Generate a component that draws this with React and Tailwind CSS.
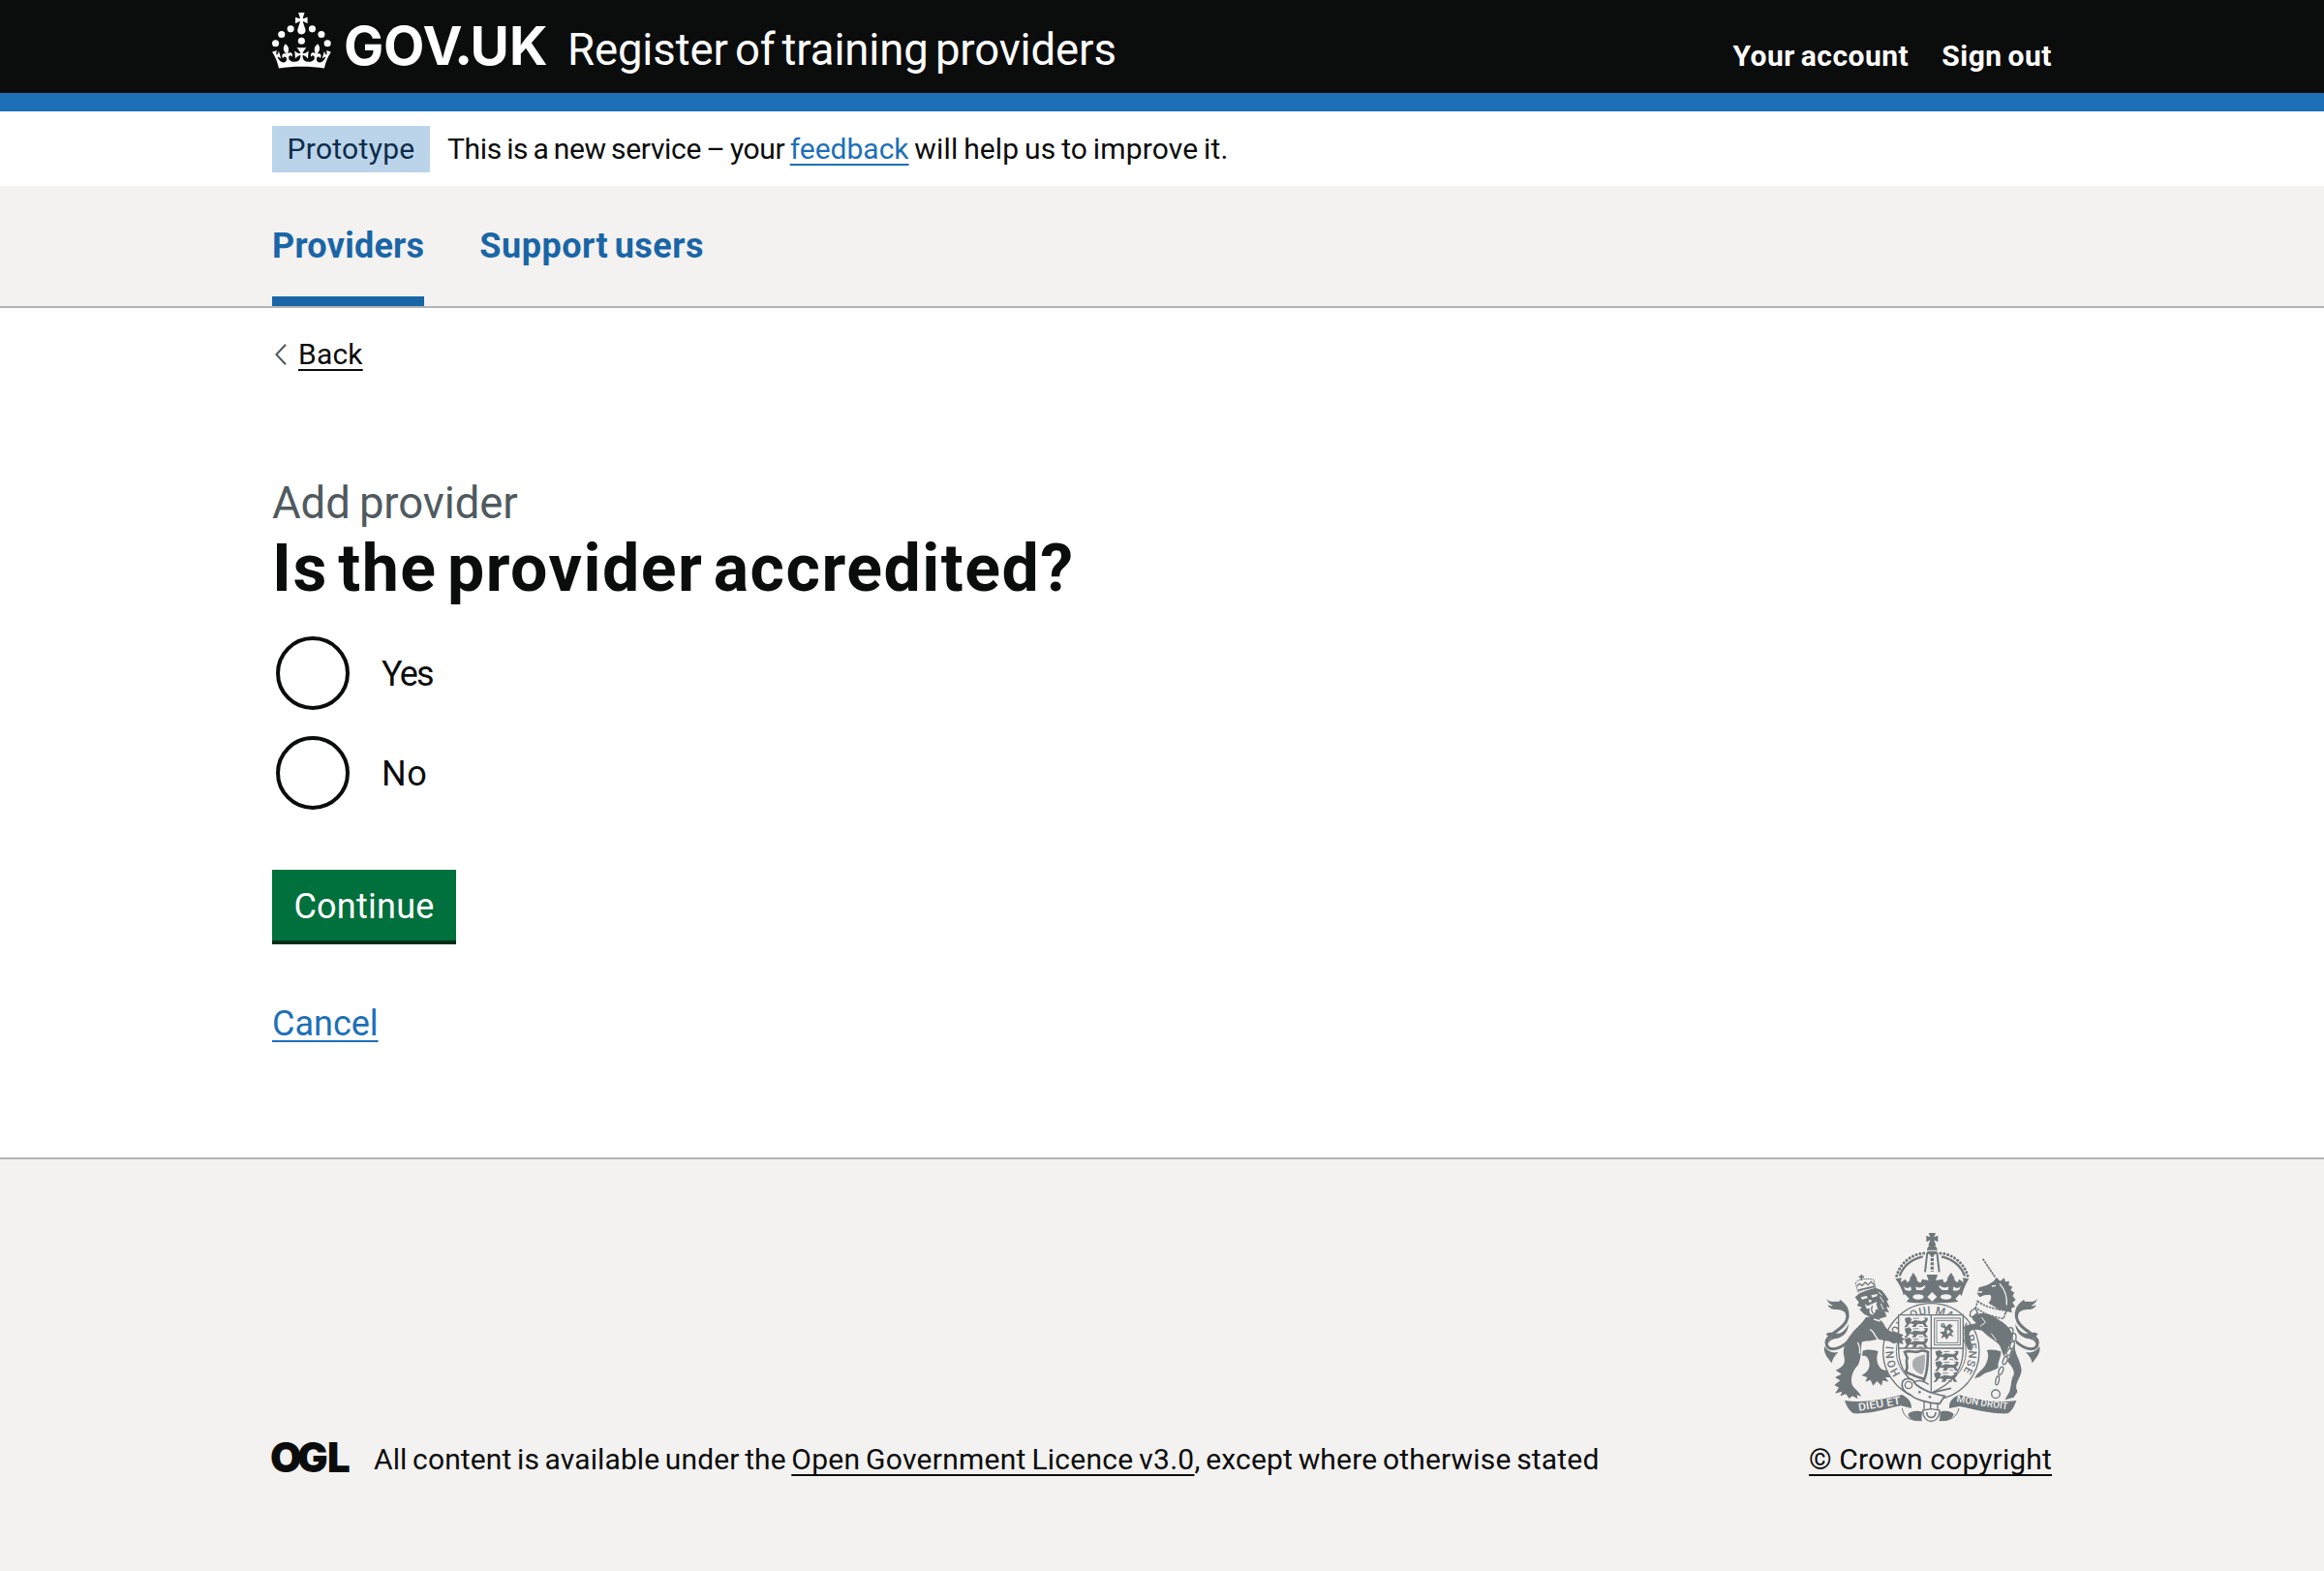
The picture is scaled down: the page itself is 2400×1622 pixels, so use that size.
import React from "react";

const underline =
  "underline decoration-2 underline-offset-[5px] [text-decoration-skip-ink:none]";

function GovUkLogo() {
  return (
    <svg width="284" height="90" viewBox="0 -13 284 90" fill="currentColor" role="img" aria-label="GOV.UK">
      <g transform="scale(0.9575)">
        <circle cx="20" cy="17.6" r="3.7" />
        <circle cx="10.2" cy="23.5" r="3.7" />
        <circle cx="3.7" cy="33.2" r="3.7" />
        <circle cx="31.7" cy="30.6" r="3.7" />
        <circle cx="43.3" cy="17.6" r="3.7" />
        <circle cx="53.2" cy="23.5" r="3.7" />
        <circle cx="59.7" cy="33.2" r="3.7" />
        <path d="M33.1,9.8c.2-.1.3-.3.5-.5l4.6,2.4v-6.8l-4.6,1.5c-.1-.2-.3-.3-.5-.5l1.9-5.9h-6.7l1.9,5.9c-.2.1-.3.3-.5.5l-4.6-1.5v6.8l4.6-2.4c.1.2.3.3.5.5l-2.6,8c-.9,2.8,1.2,5.7,4.1,5.7h0c3,0,5.1-2.9,4.1-5.7l-2.6-8ZM37,37.9s-3.4,3.8-4.1,6.1c2.2,0,4.2-.5,6.4-2.8l-.7,8.5c-2-2.8-4.4-4.1-5.7-3.8.1,3.1.5,6.7,5.8,7.2,3.7.3,6.7-1.5,7-3.8.4-2.6-2-4.3-3.7-1.6-1.4-4.5,2.4-6.1,4.9-3.2-1.9-4.5-1.8-7.7,2.4-10.9,3,4,2.6,7.3-1.2,11.1,2.4-1.3,6.2,0,4,4.6-1.2-2.8-3.7-2.2-4.2.2-.3,1.7.7,3.7,3,4.2,1.9.3,4.7-.9,7-5.9-1.3,0-2.4.7-3.9,1.7l2.4-8c.6,2.3,1.4,3.7,2.2,4.5.6-1.6.5-2.8,0-5.3l5,1.8c-2.6,3.6-5.2,8.7-7.3,17.5-7.4-1.1-15.7-1.7-24.5-1.7h0c-8.8,0-17.1.6-24.5,1.7-2.1-8.9-4.7-13.9-7.3-17.5l5-1.8c-.5,2.5-.6,3.7,0,5.3.8-.8,1.6-2.3,2.2-4.5l2.4,8c-1.5-1-2.6-1.7-3.9-1.7,2.3,5,5.2,6.2,7,5.9,2.3-.4,3.3-2.4,3-4.2-.5-2.4-3-3.1-4.2-.2-2.2-4.6,1.6-6,4-4.6-3.7-3.7-4.2-7.1-1.2-11.1,4.2,3.2,4.3,6.4,2.4,10.9,2.5-2.8,6.3-1.3,4.9,3.2-1.8-2.7-4.1-1-3.7,1.6.3,2.3,3.3,4.1,7,3.8,5.4-.5,5.7-4.2,5.8-7.2-1.3-.2-3.7,1-5.7,3.8l-.7-8.5c2.2,2.3,4.2,2.7,6.4,2.8-.7-2.3-4.1-6.1-4.1-6.1h10.6,0Z" />
      </g>
      <text y="54" className="font-[Inter,sans-serif] text-[55px] font-bold">
        <tspan x="74 115 155.5">GOV</tspan>
        <tspan x="190.5" className="font-[Lato,sans-serif] text-[60px] font-black">.</tspan>
        <tspan x="204.5 245">UK</tspan>
      </text>
    </svg>
  );
}

function OglLogo() {
  return (
    <svg width="84" height="60" viewBox="-3 -12 84 60" fill="currentColor" role="img" aria-label="OGL" className="-mb-[14px] -ml-[3px]">
      <text y="32" x="-2 26 57" className="font-[Inter,sans-serif] text-[42px] font-black">OGL</text>
    </svg>
  );
}

function Tail() {
  return (
    <g>
      <path d="M150 372C112 408 80 404 79 378C79 352 138 338 144 303C147 283 134 270 112 268" fill="none" stroke="currentColor" strokeWidth="9" />
      <path d="M80 242C90 256 104 250 118 252L122 246C146 262 152 280 149 302C143 284 126 276 112 276C96 278 86 270 84 262C92 266 96 266 99 264C88 258 82 250 80 242Z" />
      <path d="M78 352C92 342 106 352 118 350C132 346 140 336 148 320C148 346 130 362 110 366C96 368 88 372 84 384C78 376 88 366 96 362C88 362 82 358 78 352Z" />
      <path d="M73 390C70 412 82 424 96 442C98 430 104 420 116 408C98 412 84 406 73 390Z" />
    </g>
  );
}

function LionPassant({ x, y }) {
  return (
    <g transform={`translate(${x} ${y})`}>
      <path d="M2 4L16 0L24 7L20 16L34 10L56 13L66 8L60 2L74 3L72 13L66 20L74 31H64L58 22L42 22L36 31H24L30 23L18 20L8 32H0L8 22L4 14Z" />
      <path d="M28 5L46 4M46 28L58 30" stroke="currentColor" strokeWidth="2.5" />
    </g>
  );
}

function RoyalArms() {
  return (
    <svg width="224" height="198" viewBox="70 36 672 594" fill="currentColor" aria-hidden="true">
      {/* crown */}
      <path d="M396 39H418L413 52L425 47V67L413 61L419 78H395L401 61L389 67V47L401 52Z" />
      <circle cx="407" cy="92" r="16" />
      <path d="M391 94H423" stroke="#f3f2f1" strokeWidth="3" />
      <path d="M392 99L385 160M422 99L429 160" stroke="currentColor" strokeWidth="6" fill="none" />
      <path d="M407 104V158" stroke="currentColor" strokeWidth="10" strokeDasharray="9 4" />
      <path d="M378 112C344 120 318 140 306 172M436 112C470 120 496 140 508 172" stroke="currentColor" strokeWidth="7" fill="none" />
      <path d="M381 102C340 104 304 138 296 176M433 102C474 104 510 138 518 176" stroke="currentColor" strokeWidth="9" strokeLinecap="round" strokeDasharray="0.1 11.5" fill="none" />
      <path d="M293 181L312 178L310 192L324 182L330 192C336 190 340 184 338 178C344 172 344 168 348 162C354 168 356 174 360 180C358 186 364 192 372 192L376 182L396 186L390 168H424L418 186L440 182L443 192C450 192 456 186 454 180C458 174 460 168 466 162C470 168 472 172 476 178C474 184 480 190 486 192L490 182L504 192L502 178L521 181C508 200 500 222 496 250C470 258 440 254 407 254C374 254 344 260 322 250C318 222 308 200 293 181Z" />
      <path d="M318 200C322 212 334 212 340 204L343 216C336 220 326 218 322 214ZM356 204C364 212 378 208 384 200L386 206L376 216H358ZM458 204C450 212 436 208 430 200L428 206L438 216H456ZM496 200C492 212 480 212 474 204L471 216C478 220 488 218 492 214Z" fill="#f3f2f1" />
      <path d="M322 228L336 242L322 258L308 244ZM407 222L422 237L407 251L392 237ZM493 228L507 244L493 258L479 242Z" fill="#f3f2f1" />
      <ellipse cx="364" cy="237" rx="17" ry="8" fill="#f3f2f1" />
      <ellipse cx="450" cy="237" rx="17" ry="8" fill="#f3f2f1" />

      {/* garter */}
      <circle cx="404" cy="406" r="149" fill="#f3f2f1" stroke="currentColor" strokeWidth="4" />
      <circle cx="404" cy="406" r="108" fill="none" stroke="currentColor" strokeWidth="3" />
      <defs>
        <path id="garter" d="M309 475A117 117 0 1 1 499 475" />
        <path id="motto-left" d="M180 590L316 568" />
        <path id="motto-right" d="M482 562L644 587" />
      </defs>
      <text className="font-[Roboto,sans-serif] text-[34px] font-medium">
        <textPath href="#garter" startOffset="0" textLength="505">HONI SOIT QUI MAL Y PENSE</textPath>
      </text>

      {/* shield */}
      <path d="M303 293H503V400C503 466 468 508 404 534C340 508 303 466 303 400Z" fill="#f3f2f1" stroke="currentColor" strokeWidth="4" />
      <path d="M404 293V530M303 396H503" stroke="currentColor" strokeWidth="4" />
      <LionPassant x={320} y={299} />
      <LionPassant x={320} y={331} />
      <LionPassant x={320} y={363} />
      <LionPassant x={415} y={402} />
      <LionPassant x={415} y={435} />
      <LionPassant x={411} y={469} />
      <rect x="414" y="303" width="80" height="83" fill="none" stroke="currentColor" strokeWidth="3" />
      <rect x="421" y="310" width="66" height="69" fill="none" stroke="currentColor" strokeWidth="2.5" />
      <path d="M434 320L444 318L450 330L460 320L472 326L464 334L474 344L466 350L474 360L460 356L452 370L446 360L434 366L440 354L430 346L444 344L446 334L434 330Z" />
      <path d="M454 340L462 344L455 352ZM438 324L444 324" fill="#f3f2f1" stroke="#f3f2f1" strokeWidth="3" />
      <path d="M322 408C340 400 352 412 366 406C378 400 384 404 394 408C392 430 396 462 382 494C374 484 362 488 350 480C340 474 330 478 326 466C336 452 322 438 330 426Z" fill="none" stroke="currentColor" strokeWidth="8" />
      <path d="M346 440C348 424 366 422 384 414C386 440 384 462 376 478C358 470 344 462 346 440Z" opacity="0.55" />

      {/* lion */}
      <Tail />
      <path d="M188 168V186M180 175H196" stroke="currentColor" strokeWidth="5" />
      <path d="M170 194C176 182 202 178 226 184L232 210C216 208 196 212 177 222Z" fill="none" stroke="currentColor" strokeWidth="3" strokeDasharray="5 2" />
      <path d="M174 204L182 196L190 202L200 192L208 200L218 190L228 200M178 216L230 204" fill="none" stroke="currentColor" strokeWidth="4" />
      <path d="M168 238L182 226L204 217L232 209L250 216L262 230L272 246L266 250L276 270L265 268L274 286L260 282L266 298L240 306L216 300L196 290L182 276L190 270L174 264L180 254Z" />
      <path d="M186 238L204 234L208 240L190 245ZM218 232L238 228L236 235L222 239ZM210 246L218 246L219 253L212 254ZM198 258L206 265L222 258L236 252L234 260L240 278L234 274L228 290C216 296 210 286 214 272L204 274Z" fill="#f3f2f1" />
      <path d="M246 236L256 254M248 258L256 276M240 222L252 232" stroke="#f3f2f1" strokeWidth="3" />
      <path d="M222 264C216 276 220 288 230 290" fill="none" stroke="currentColor" strokeWidth="4" />
      <path d="M202 300C226 296 252 302 262 330C276 350 296 346 318 354L312 362L324 368L314 372L318 384L300 378L288 382L274 374C258 372 244 370 238 366C230 374 206 372 190 376C184 396 190 420 178 448C164 462 154 482 158 506C162 520 182 528 187 546L174 540L176 553L160 544L150 552L140 538L122 544L128 530L106 536L118 518L104 510L122 496L106 486L126 476L108 464C136 452 138 440 134 420C128 396 140 372 158 350C174 330 188 322 202 300Z" />
      <path d="M192 404C206 398 226 400 240 406C234 422 234 440 244 454C254 470 278 460 270 476L278 486L262 486L272 500L254 496L250 512L236 498L224 512L216 494L200 500L206 486L188 480C204 472 216 458 212 440C210 424 200 416 190 420Z" />
      <path d="M214 338C228 342 228 360 238 366M176 378C184 392 184 400 182 412M226 306L246 312" fill="none" stroke="#f3f2f1" strokeWidth="4" />

      {/* unicorn */}
      <g transform="matrix(-1 0 0 1 813 0)">
        <Tail />
      </g>
      <path d="M564 119L602 176" stroke="currentColor" strokeWidth="5" strokeDasharray="8 2" />
      <path d="M546 226L552 208L578 200L598 188L606 176L618 188L630 178L634 190L646 188L644 200L656 206L650 216L662 224L656 234L666 246L656 254L664 268L652 272L654 286L640 282L630 296C622 276 600 270 582 256C588 246 594 238 586 230L568 232L554 238Z" />
      <path d="M592 204L604 202M546 222L562 222M616 196C632 214 640 236 638 262" fill="none" stroke="#f3f2f1" strokeWidth="4" />
      <path d="M548 250C570 268 600 274 636 280L628 304C598 300 566 290 542 270Z" fill="#f3f2f1" stroke="currentColor" strokeWidth="5" strokeDasharray="7 3" />
      <path d="M526 282L540 272L548 286L532 300L524 296Z" fill="#f3f2f1" stroke="currentColor" strokeWidth="4" />
      <path d="M544 290C566 284 596 292 616 310C640 322 664 352 664 388C660 412 682 432 684 466C680 490 664 504 668 522C676 532 664 540 660 548L632 556L646 532C654 508 650 494 660 478C664 460 644 442 634 428C620 410 624 388 604 376C590 366 572 352 562 342C544 336 524 336 522 352C522 366 534 388 530 404L518 400C508 382 504 356 508 330C516 320 530 324 544 318C534 310 528 304 532 296Z" />
      <path d="M576 402C592 398 608 402 620 406C622 424 608 440 612 456C594 470 574 466 556 484L538 490L546 476C560 464 570 454 574 444C580 430 584 416 576 402Z" />
      <path d="M560 300L572 316L556 328M590 350L606 372" fill="none" stroke="#f3f2f1" strokeWidth="3" />
      <path d="M656 340C668 350 664 366 656 384C644 410 632 432 620 468L604 524" fill="none" stroke="#f3f2f1" strokeWidth="15" />
      <g fill="none" stroke="currentColor" strokeWidth="4">
        <ellipse cx="650" cy="342" rx="8" ry="10" />
        <ellipse cx="661" cy="362" rx="6" ry="12" />
        <ellipse cx="655" cy="386" rx="6" ry="12" transform="rotate(18 655 386)" />
        <ellipse cx="645" cy="408" rx="6" ry="12" transform="rotate(28 645 408)" />
        <ellipse cx="633" cy="434" rx="6" ry="13" transform="rotate(20 633 434)" />
        <ellipse cx="620" cy="466" rx="6" ry="13" transform="rotate(22 620 466)" />
        <ellipse cx="609" cy="496" rx="5" ry="14" transform="rotate(12 609 496)" />
        <circle cx="604" cy="538" r="13" />
      </g>

      {/* buckle */}
      <path d="M316 498C328 484 350 490 356 508C380 528 404 536 446 544L430 568C396 566 356 556 340 540C322 534 308 518 316 498Z" fill="#f3f2f1" stroke="currentColor" strokeWidth="5" />
      <circle cx="334" cy="510" r="11" fill="none" stroke="currentColor" strokeWidth="4" />
      <path d="M348 504C364 488 384 500 396 508M466 520L412 532" fill="none" stroke="currentColor" strokeWidth="5" />
      <circle cx="368" cy="532" r="4" />
      <circle cx="400" cy="547" r="4" />

      {/* scroll */}
      <path d="M136 558C190 566 250 556 314 540C328 548 344 558 343 582L310 574C268 582 222 600 164 598C150 590 142 576 136 558Z" />
      <path d="M668 558C612 566 552 556 490 540C474 548 458 558 460 582L492 576C536 584 586 600 642 598C654 590 662 576 668 558Z" />
      <path d="M314 582C318 610 340 622 376 620M490 582C484 610 462 622 428 620" fill="none" stroke="currentColor" strokeWidth="3" />
      <path d="M332 600C344 586 366 590 376 592L374 620C356 622 336 618 332 600ZM474 600C462 586 442 590 432 592L430 620C452 622 468 618 474 600Z" />
      <path d="M382 560V588H424V564M402 564V584" fill="none" stroke="currentColor" strokeWidth="4" />
      <path d="M378 588C378 634 430 634 430 588L404 584Z" fill="#f3f2f1" stroke="currentColor" strokeWidth="4" />
      <path d="M390 594C390 616 418 616 418 594" fill="none" stroke="currentColor" strokeWidth="5" />
      <g fill="#f3f2f1" className="font-[Roboto,sans-serif] text-[33px] font-medium">
        <text><textPath href="#motto-left" textLength="132" lengthAdjust="spacingAndGlyphs">DIEU ET</textPath></text>
        <text className="text-[30px]"><textPath href="#motto-right" textLength="160" lengthAdjust="spacingAndGlyphs">MON DROIT</textPath></text>
      </g>
    </svg>
  );
}

function Radio({ label, tracking }) {
  return (
    <label className="flex items-center">
      <span className="ml-1 size-[76px] rounded-full border-4 border-[#0b0c0c] bg-white" />
      <span className={`ml-[33px] pt-0.5 text-[36px] leading-none ${tracking}`}>{label}</span>
    </label>
  );
}

export default function App() {
  return (
    <div className="flex h-[1622px] flex-col bg-white font-[Roboto,sans-serif] text-[30px] leading-none text-[#0b0c0c]">
      <header className="h-[115px] shrink-0 border-b-[19px] border-[#1d70b8] bg-[#0b0c0c] text-white">
        <div className="mx-auto flex w-[1838px] items-start">
          <a><GovUkLogo /></a>
          <span className="ml-[21px] mt-[29px] text-[45.5px] leading-none tracking-[-0.12px] [word-spacing:-4px]">Register of training providers</span>
          <nav className="ml-auto mt-[43px] flex gap-[34px] font-bold tracking-[0.5px] [word-spacing:-2px]">
            <a>Your account</a>
            <a>Sign out</a>
          </nav>
        </div>
      </header>

      <div className="h-[77px] shrink-0 pt-[15px]">
        <div className="mx-auto flex w-[1838px] leading-[47px]">
          <strong className="h-12 w-[163px] bg-[#bbd4ea] text-center font-normal tracking-[0.3px] text-[#0c2d4a]">Prototype</strong>
          <p className="ml-[18px] whitespace-pre">
            <span className="tracking-[-0.34px] [word-spacing:-1.8px]">This is a new service – your </span>
            <a className={`text-[#1d70b8] ${underline}`}>feedback</a>
            <span className="tracking-[0.14px] [word-spacing:-1.8px]"> will help us to improve it.</span>
          </p>
        </div>
      </div>

      <div className="h-[126px] shrink-0 border-b-2 border-[#b1b4b6] bg-[#f3f2f1]">
        <nav className="mx-auto flex h-full w-[1838px] gap-[57px] text-[36px] font-bold leading-none tracking-[0.25px] text-[#1a65a6]">
          <a className="border-b-10 border-[#1a65a6] pt-[44px]">Providers</a>
          <a className="pt-[44px] tracking-[0.5px] [word-spacing:-3px]">Support users</a>
        </nav>
      </div>

      <main className="mx-auto flex w-[1838px] grow flex-col items-start">
        <a className="mt-[33px] flex">
          <svg width="12" height="22" viewBox="0 0 12 22" fill="none" stroke="#505a5f" strokeWidth="2" className="ml-[3px] mt-[4px]">
            <path d="M11 0.7L1.4 11L11 21.3" />
          </svg>
          <span className={`ml-3 tracking-[0.2px] ${underline}`}>Back</span>
        </a>
        <span className="mt-[116px] text-[45.5px] leading-none tracking-[-0.1px] text-[#505a5f] [word-spacing:-2px]">Add provider</span>
        <h1 className="mt-[10px] text-[68px] font-bold leading-none tracking-[1.5px] [word-spacing:-8px]">Is the provider accredited?</h1>
        <div className="mt-[36px] flex flex-col gap-[27px]">
          <Radio label="Yes" tracking="tracking-[-1.8px]" />
          <Radio label="No" tracking="tracking-[0.5px]" />
        </div>
        <button className="mt-[62px] h-[77px] w-[190px] border-b-4 border-[#002d18] bg-[#00703c] pt-[3px] text-[36px] leading-none tracking-[0.25px] text-white">Continue</button>
        <a className={`mt-[64px] text-[36px] leading-none text-[#1d70b8] ${underline}`}>Cancel</a>
      </main>

      <footer className="h-[427px] shrink-0 border-t-2 border-[#b1b4b6] bg-[#f3f2f1]">
        <div className="mx-auto flex h-[325px] w-[1838px] items-end">
          <OglLogo />
          <p className="ml-6 whitespace-pre [word-spacing:-2px]">
            <span className="tracking-[0.12px]">All content is available under the </span>
            <a className={`tracking-[0.27px] ${underline}`}>Open Government Licence v3.0</a>
            <span className="tracking-[0.18px]">, except where otherwise stated</span>
          </p>
          <a className="ml-auto flex flex-col items-center">
            <span className="mb-[22px] ml-0.5 text-[#6f777b]"><RoyalArms /></span>
            <span className={`tracking-[0.15px] ${underline}`}>© Crown copyright</span>
          </a>
        </div>
      </footer>
    </div>
  );
}
